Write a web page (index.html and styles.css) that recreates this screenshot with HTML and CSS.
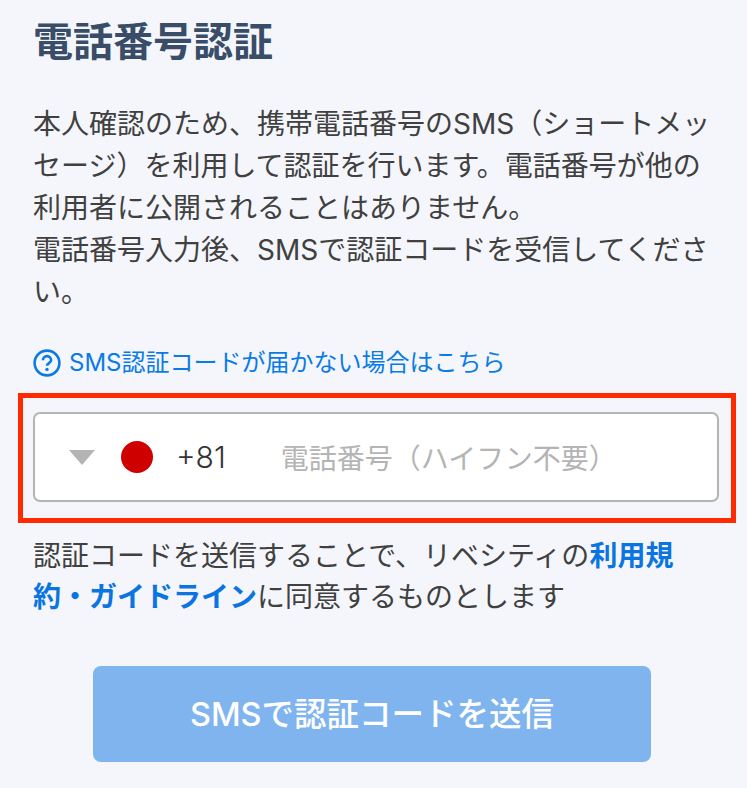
FILE: index.html
```html
<!DOCTYPE html>
<html lang="ja">
<head>
    <meta charset="UTF-8">
    <title>電話番号認証</title>
    <link rel="stylesheet" href="styles.css">
</head>
<body>
    <div class="container">
        <h1>電話番号認証</h1>
        <p class="lead">本人確認のため、携帯電話番号のSMS（ショートメッセージ）を利用して認証を行います。電話番号が他の利用者に公開されることはありません。<br>電話番号入力後、SMSで認証コードを受信してください。</p>

        <a class="help" href="#">
            <svg class="help-icon" viewBox="0 0 28 28" aria-hidden="true">
                <circle cx="14" cy="14" r="12.4" fill="none" stroke="#0a7be6" stroke-width="2.6"/>
                <path d="M9.9 11.2a4.1 4.1 0 0 1 8.2 0c0 2.8-4.1 3-4.1 5.6" fill="none" stroke="#0a7be6" stroke-width="2.6"/>
                <circle cx="14" cy="20.4" r="1.7" fill="#0a7be6"/>
            </svg>
            <span>SMS認証コードが届かない場合はこちら</span>
        </a>

        <div class="phone-box">
            <span class="arrow"></span>
            <span class="flag"></span>
            <span class="code">+81</span>
            <span class="placeholder">電話番号（ハイフン不要）</span>
            <div class="highlight"></div>
        </div>

        <p class="terms">認証コードを送信することで、リベシティの<a href="#">利用規約・ガイドライン</a>に同意するものとします</p>

        <button class="submit">SMSで認証コードを送信</button>
    </div>
</body>
</html>
```

FILE: styles.css
```css
body {
    margin: 0;
    background: #f4f6fb;
    font-family: "Inter", "Noto Sans CJK JP", sans-serif;
    color: #404040;
}
.container {
    padding: 16px 28px 26px 33px;
}
h1 {
    margin: 0;
    font-size: 40px;
    line-height: 52px;
    font-weight: 700;
    color: #3a4d68;
}
.lead {
    margin: 35px 0 0;
    font-size: 28px;
    line-height: 42px;
}
.help {
    display: flex;
    align-items: center;
    gap: 8px;
    margin-top: 32px;
    font-size: 24px;
    line-height: 36px;
    color: #0a7be6;
    text-decoration: none;
}
.help-icon {
    width: 28px;
    height: 28px;
}
.phone-box {
    position: relative;
    display: flex;
    align-items: center;
    height: 90px;
    margin-top: 31px;
    padding-left: 34px;
    box-sizing: border-box;
    background: white;
    border: 2px solid #b4b4b4;
    border-radius: 7px;
    font-size: 28px;
}
.arrow {
    width: 0;
    height: 0;
    border-left: 13px solid transparent;
    border-right: 13px solid transparent;
    border-top: 15px solid #b4b4b4;
}
.flag {
    width: 32px;
    height: 32px;
    margin-left: 26px;
    border-radius: 50%;
    background: #cf0000;
}
.code {
    margin-left: 23px;
    font-size: 30px;
    font-weight: 300;
    color: #333;
}
.placeholder {
    margin-left: 55px;
    color: #b4b4b4;
}
.highlight {
    position: absolute;
    top: -21px;
    left: -17px;
    right: -19px;
    bottom: -23px;
    border: 5px solid #ff2a00;
}
.terms {
    max-width: 660px;
    margin: 34px 0 0;
    font-size: 28px;
    line-height: 41px;
}
.terms a {
    color: #0a75e0;
    font-weight: 700;
    text-decoration: none;
}
.submit {
    display: block;
    width: 558px;
    height: 96px;
    margin: 48px 0 0 60px;
    padding: 0 0 5px;
    background: #80b4ef;
    color: white;
    border: none;
    border-radius: 8px;
    font-family: inherit;
    font-size: 32.5px;
    font-weight: 500;
}
```
